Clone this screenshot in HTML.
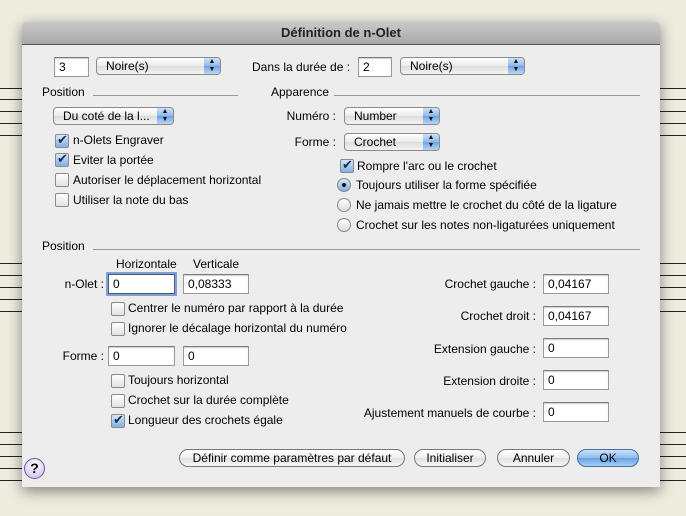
<!DOCTYPE html>
<html><head><meta charset="utf-8"><style>
body{margin:0;width:686px;height:516px;background:#eeebdf;position:relative;overflow:hidden;font-family:"Liberation Sans","DejaVu Sans",sans-serif;font-size:12px;color:#000}
.a{position:absolute}
.sl{position:absolute;height:1px;background:#222}
.win{position:absolute;left:22px;top:22px;width:638px;height:465px;background:#ededed;box-shadow:0 4px 14px rgba(0,0,0,.45);border-radius:4px 4px 0 0}
.tb{position:absolute;left:0;top:0;width:638px;height:22px;background:linear-gradient(#c9c9c9,#a9a9a9);border-bottom:1px solid #555;border-radius:4px 4px 0 0;text-align:center;font-size:13px;font-weight:bold;line-height:22px;color:#222}
.t{position:absolute;white-space:nowrap;line-height:14px}
.r{text-align:right}
.in{position:absolute;background:#fff;border:1px solid #9a9a9a;border-top-color:#7a7a7a;height:18px;box-sizing:border-box;line-height:18px;padding-left:4px;box-shadow:inset 0 1px 1px #ccc}
.foc{box-shadow:0 0 0 2px #7aa4d8;border-color:#557}
.pp{position:absolute;height:18px;box-sizing:border-box;border:1px solid #8a8a8a;border-radius:4px;background:linear-gradient(#fff,#eaeaea 50%,#dcdcdc 51%,#f4f4f4);line-height:16px;padding-left:9px}
.pp i{position:absolute;right:0;top:0;width:16px;height:16px;border-radius:0 3px 3px 0;background:linear-gradient(#cfe2f7,#8db8ea 50%,#6fa4e2 51%,#b8d6f5);font-style:normal;font-size:7px;line-height:8px;text-align:center;color:#111}
.cb{position:absolute;width:12px;height:12px;border:1px solid #8a8a8a;border-radius:2px;background:linear-gradient(#fff,#e2e2e2)}
.cb.on{background:linear-gradient(#d5e6f8,#7fb0e6)}
.cb.on:after{content:"✔";position:absolute;left:1px;top:-3px;font-size:13px;color:#1a2a50}
.rd{position:absolute;width:12px;height:12px;border:1px solid #8a8a8a;border-radius:50%;background:linear-gradient(#fff,#dedede)}
.rd.on{background:linear-gradient(#d5e6f8,#7fb0e6)}
.rd.on:after{content:"";position:absolute;left:4px;top:4px;width:4px;height:4px;border-radius:50%;background:#111}
.ln{position:absolute;height:1px;background:#999}
.bt{position:absolute;height:18px;box-sizing:border-box;border:1px solid #777;border-radius:9px;background:linear-gradient(#fff,#efefef 50%,#e0e0e0 51%,#f7f7f7);text-align:center;line-height:16px}
.ok{background:linear-gradient(#cde2f9,#8fbcee 50%,#63a0e6 51%,#a8d0f7);border-color:#4a6e9e}
</style></head><body>
<div class="sl" style="left:0;top:88px;width:24px"></div><div class="sl" style="left:0;top:99px;width:24px"></div><div class="sl" style="left:0;top:111px;width:24px"></div><div class="sl" style="left:0;top:123px;width:24px"></div><div class="sl" style="left:0;top:135px;width:24px"></div>
<div class="sl" style="left:658px;top:88px;width:28px"></div><div class="sl" style="left:658px;top:99px;width:28px"></div><div class="sl" style="left:658px;top:111px;width:28px"></div><div class="sl" style="left:658px;top:123px;width:28px"></div><div class="sl" style="left:658px;top:135px;width:28px"></div>
<div class="sl" style="left:0;top:263px;width:24px"></div><div class="sl" style="left:0;top:275px;width:24px"></div><div class="sl" style="left:0;top:287px;width:24px"></div><div class="sl" style="left:0;top:299px;width:24px"></div><div class="sl" style="left:0;top:311px;width:24px"></div>
<div class="sl" style="left:658px;top:263px;width:28px"></div><div class="sl" style="left:658px;top:275px;width:28px"></div><div class="sl" style="left:658px;top:287px;width:28px"></div><div class="sl" style="left:658px;top:299px;width:28px"></div><div class="sl" style="left:658px;top:311px;width:28px"></div>
<div class="sl" style="left:0;top:432px;width:24px"></div><div class="sl" style="left:0;top:444px;width:24px"></div><div class="sl" style="left:0;top:456px;width:24px"></div><div class="sl" style="left:0;top:468px;width:24px"></div><div class="sl" style="left:0;top:480px;width:24px"></div>
<div class="sl" style="left:658px;top:432px;width:28px"></div><div class="sl" style="left:658px;top:444px;width:28px"></div><div class="sl" style="left:658px;top:456px;width:28px"></div><div class="sl" style="left:658px;top:468px;width:28px"></div><div class="sl" style="left:658px;top:480px;width:28px"></div>
<div class="win"><div class="tb">Définition de n-Olet</div></div>

<div class="in" style="left:54px;top:57px;width:35px;height:20px">3</div>
<div class="pp" style="left:96px;top:57px;width:125px">Noire(s)<i>▲<br>▼</i></div>
<div class="t" style="left:252px;top:60px">Dans la durée de :</div>
<div class="in" style="left:358px;top:57px;width:34px;height:20px">2</div>
<div class="pp" style="left:400px;top:57px;width:125px">Noire(s)<i>▲<br>▼</i></div>

<div class="t" style="left:42px;top:85px">Position</div><div class="ln" style="left:93px;top:95px;width:145px"></div>
<div class="t" style="left:271px;top:85px">Apparence</div><div class="ln" style="left:334px;top:95px;width:306px"></div>

<div class="pp" style="left:53px;top:107px;width:121px">Du coté de la l...<i>▲<br>▼</i></div>
<div class="cb on" style="left:55px;top:134px"></div><div class="t" style="left:73px;top:133px">n-Olets Engraver</div>
<div class="cb on" style="left:55px;top:153px"></div><div class="t" style="left:73px;top:153px">Eviter la portée</div>
<div class="cb" style="left:55px;top:173px"></div><div class="t" style="left:73px;top:173px">Autoriser le déplacement horizontal</div>
<div class="cb" style="left:55px;top:193px"></div><div class="t" style="left:73px;top:193px">Utiliser la note du bas</div>

<div class="t r" style="left:236px;width:100px;top:109px">Numéro :</div>
<div class="pp" style="left:344px;top:107px;width:96px">Number<i>▲<br>▼</i></div>
<div class="t r" style="left:236px;width:100px;top:135px">Forme :</div>
<div class="pp" style="left:344px;top:133px;width:96px">Crochet<i>▲<br>▼</i></div>
<div class="cb on" style="left:340px;top:159px"></div><div class="t" style="left:357px;top:159px">Rompre l'arc ou le crochet</div>
<div class="rd on" style="left:337px;top:178px"></div><div class="t" style="left:356px;top:178px">Toujours utiliser la forme spécifiée</div>
<div class="rd" style="left:337px;top:198px"></div><div class="t" style="left:356px;top:198px">Ne jamais mettre le crochet du côté de la ligature</div>
<div class="rd" style="left:337px;top:218px"></div><div class="t" style="left:356px;top:218px">Crochet sur les notes non-ligaturées uniquement</div>

<div class="t" style="left:42px;top:239px">Position</div><div class="ln" style="left:93px;top:249px;width:547px"></div>
<div class="t" style="left:116px;top:257px">Horizontale</div>
<div class="t" style="left:193px;top:257px">Verticale</div>
<div class="t r" style="left:30px;width:74px;top:277px">n-Olet :</div>
<div class="in foc" style="left:108px;top:274px;width:67px;height:20px">0</div>
<div class="in" style="left:183px;top:274px;width:66px;height:20px">0,08333</div>
<div class="cb" style="left:111px;top:302px"></div><div class="t" style="left:128px;top:301px">Centrer le numéro par rapport à la durée</div>
<div class="cb" style="left:111px;top:322px"></div><div class="t" style="left:128px;top:321px">Ignorer le décalage horizontal du numéro</div>
<div class="t r" style="left:30px;width:74px;top:349px">Forme :</div>
<div class="in" style="left:108px;top:346px;width:67px;height:20px">0</div>
<div class="in" style="left:183px;top:346px;width:66px;height:20px">0</div>
<div class="cb" style="left:111px;top:374px"></div><div class="t" style="left:128px;top:373px">Toujours horizontal</div>
<div class="cb" style="left:111px;top:394px"></div><div class="t" style="left:128px;top:393px">Crochet sur la durée complète</div>
<div class="cb on" style="left:111px;top:414px"></div><div class="t" style="left:128px;top:413px">Longueur des crochets égale</div>

<div class="t r" style="left:336px;width:200px;top:277px">Crochet gauche :</div><div class="in" style="left:543px;top:274px;width:66px;height:20px">0,04167</div>
<div class="t r" style="left:336px;width:200px;top:309px">Crochet droit :</div><div class="in" style="left:543px;top:306px;width:66px;height:20px">0,04167</div>
<div class="t r" style="left:336px;width:200px;top:342px">Extension gauche :</div><div class="in" style="left:543px;top:338px;width:66px;height:20px">0</div>
<div class="t r" style="left:336px;width:200px;top:374px">Extension droite :</div><div class="in" style="left:543px;top:370px;width:66px;height:20px">0</div>
<div class="t r" style="left:336px;width:200px;top:406px">Ajustement manuels de courbe :</div><div class="in" style="left:543px;top:402px;width:66px;height:20px">0</div>

<div class="bt" style="left:179px;top:449px;width:226px">Définir comme paramètres par défaut</div>
<div class="bt" style="left:414px;top:449px;width:72px">Initialiser</div>
<div class="bt" style="left:497px;top:449px;width:73px">Annuler</div>
<div class="bt ok" style="left:577px;top:449px;width:62px">OK</div>
<div class="a" style="left:24px;top:458px;width:19px;height:19px;border:1px solid #6a5a9a;border-radius:50%;background:radial-gradient(circle at 50% 30%,#fff,#c9b8f0);text-align:center;font-weight:bold;font-size:14px;line-height:19px">?</div>
</body></html>
